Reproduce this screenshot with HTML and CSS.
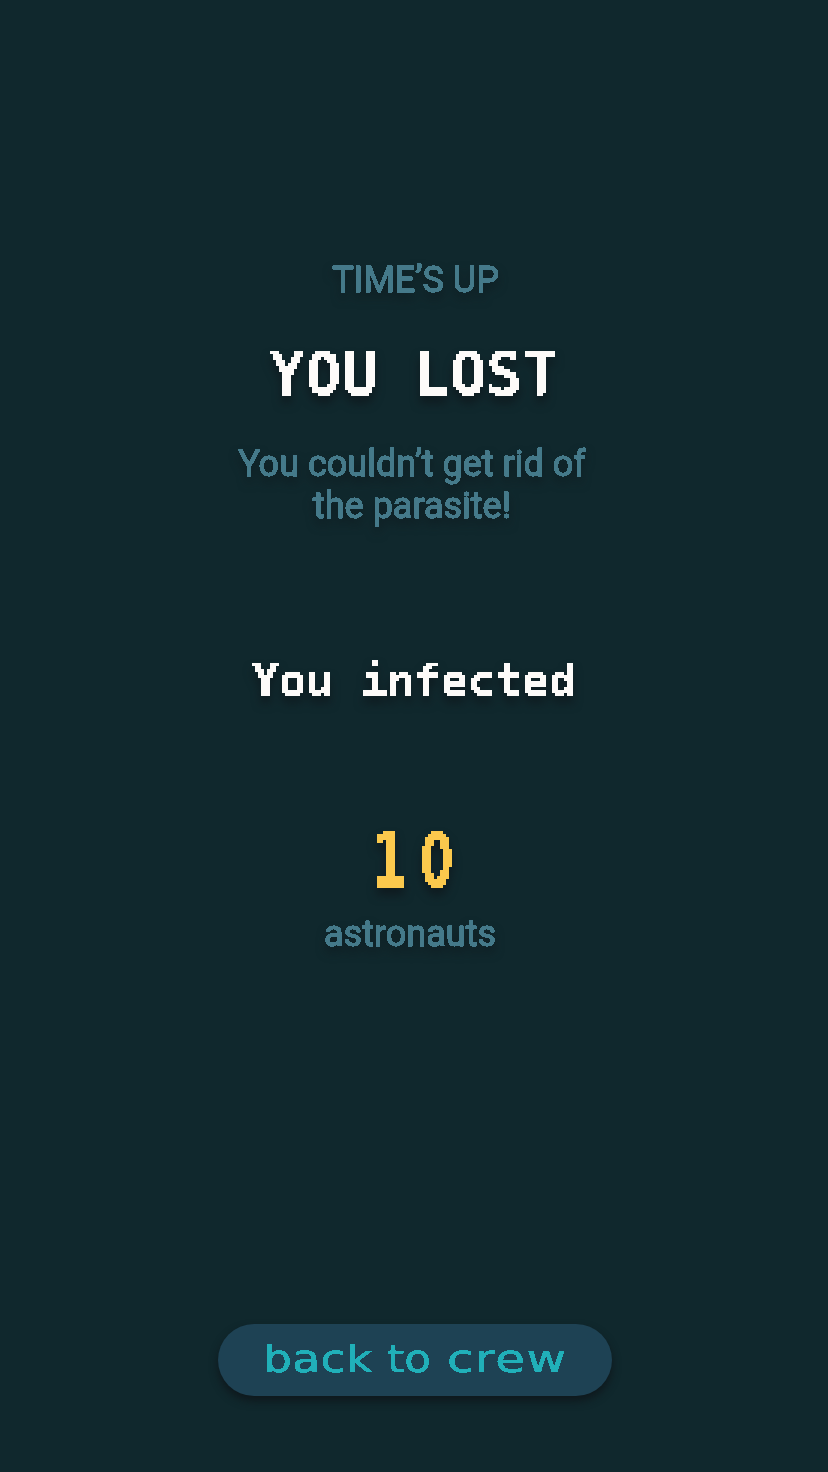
FILE: index.html
```html
<!DOCTYPE html>
<html lang="en">
<head>
<meta charset="utf-8">
<title>You lost</title>
<link rel="stylesheet" href="styles.css">
</head>
<body>
<svg class="defs" width="0" height="0" aria-hidden="true">
  <!-- hard, unsmoothed edges -->
  <filter id="crisp" x="-10%" y="-20%" width="120%" height="140%" color-interpolation-filters="sRGB">
    <feComponentTransfer><feFuncA type="discrete" tableValues="0 0 1 1 1"/></feComponentTransfer>
  </filter>
  <!-- blocky pixel lettering: one sample per cell, grown to fill the cell -->
  <filter id="pixel-title" x="-10%" y="-20%" width="120%" height="140%" color-interpolation-filters="sRGB">
    <feFlood x="1" y="1" width="1" height="1" flood-color="#000" result="dot"/>
    <feOffset in="dot" dx="0" dy="0" x="0" y="0" width="3" height="3"/>
    <feTile result="grid"/>
    <feComposite in="SourceGraphic" in2="grid" operator="in"/>
    <feComponentTransfer><feFuncA type="discrete" tableValues="0 1"/></feComponentTransfer>
    <feMorphology operator="dilate" radius="1 1"/>
  </filter>
</svg>
<main class="screen">
  <p class="label">TIME’S UP</p>
  <h1 class="title"><span>YOU LOST</span></h1>
  <p class="message">You couldn’t get rid of<br>the parasite!</p>
  <h2 class="subtitle"><span>You infected</span></h2>
  <div class="count"><span>10</span></div>
  <p class="unit">astronauts</p>
  <button class="back"><span class="w1">back</span><span class="w2">to</span><span class="w3">crew</span></button>
</main>
</body>
</html>
```
FILE: styles.css
```css
* { box-sizing: border-box; margin: 0; padding: 0; }
body { background: #10282d; font-family: Roboto, sans-serif; color: #457a8a; }
.defs { display: block; height: 0; }
.screen {
  height: 1472px;
  padding-top: 259px;
  display: flex;
  flex-direction: column;
  align-items: center;
}
.label, .message, .unit {
  font-size: 36px;
  line-height: 42px;
  text-align: center;
  white-space: nowrap;
  -webkit-text-stroke: 1.1px #457a8a;
  filter: url(#crisp) drop-shadow(0 6px 5px rgba(14, 24, 29, .65));
}
.label { padding-left: 3px; }
.title, .subtitle {
  font-family: "DejaVu Sans Mono", monospace;
  font-weight: 700;
  color: #fdfbf9;
  white-space: nowrap;
}
.title, .subtitle { filter: url(#pixel-title) drop-shadow(0 7px 5px rgba(14, 22, 27, .8)); }
.title span, .subtitle span, .count span { display: inline-block; }
.title { font-size: 60px; line-height: 70px; margin-top: 38px; }
.message { margin-top: 34px; padding-right: 4px; }
.subtitle { font-size: 45px; line-height: 54px; margin-top: 127px; letter-spacing: -.09px; }
.count {
  font-family: "DejaVu Sans", sans-serif;
  font-weight: 700;
  font-size: 76px;
  line-height: 90px;
  color: #fbc94d;
  margin-top: 108px;
  filter: url(#pixel-title) drop-shadow(0 7px 5px rgba(14, 22, 27, .8));
}
.count span { letter-spacing: 22px; margin-right: -22px; transform: translateX(-5px) scaleX(.63); }
.unit { margin-top: 7px; padding-right: 8px; }
.back {
  display: flex;
  justify-content: flex-start;
  text-align: left;
  align-items: center;
  width: 394px;
  height: 72px;
  margin: auto 0 76px 2px;
  padding: 0 0 3px 45px;
  border: 0;
  border-radius: 36px;
  background: #1e4254;
  box-shadow: 0 5px 8px rgba(14, 22, 27, .9);
  color: #21b0b9;
  font: 38px/44px "DejaVu Sans", sans-serif;
}
.back span { display: block; transform-origin: 0 50%; transform: scaleX(1.2); filter: url(#crisp); -webkit-text-stroke: .5px #21b0b9; }
.back .w1 { width: 124px; letter-spacing: .3px; }
.back .w2 { width: 60px; transform: scaleX(1.15); }
.back .w3 { width: 120px; letter-spacing: 1.2px; transform: scaleX(1.27); }
```
